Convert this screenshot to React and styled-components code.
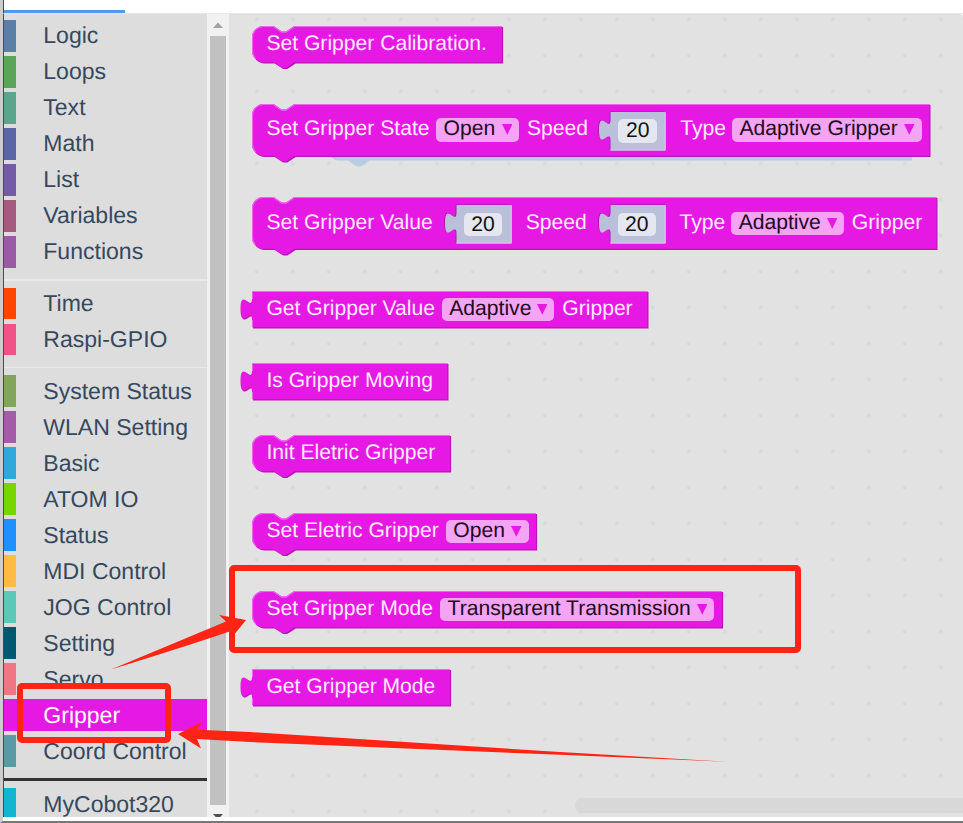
import React from "react";
import styled, { createGlobalStyle } from "styled-components";

const Global = createGlobalStyle`
  * { box-sizing: border-box; }
  body { margin: 0; background: #fff; overflow: hidden; font-family: "Liberation Sans", Arial, sans-serif; }
`;

const Page = styled.div`
  position: relative;
  display: flex;
  flex-direction: column;
  width: 963px;
  height: 823px;
  overflow: hidden;
  background: #fff;
  border-left: 3px solid #cdcdcd;
  border-bottom: 2px solid #777;
`;

const TabBar = styled.div`
  flex: none;
  display: flex;
  align-items: flex-end;
  height: 14px;
  border-left: 1px solid #4a4a4a;
  border-bottom: 1px solid #e4e8ec;
`;

const ActiveTab = styled.div`
  width: 121px;
  height: 3px;
  background: #4e9ae8;
`;

const Main = styled.div`
  flex: none;
  display: flex;
  height: 803px;
  border-left: 1px solid #4a4a4a;
`;

const Toolbox = styled.div`
  flex: none;
  display: flex;
  flex-direction: column;
  width: 203px;
  padding-top: 6px;
  overflow: hidden;
  background: #ddd;
`;

const Category = styled.div`
  flex: none;
  height: 31.68px;
  margin-bottom: 4.32px;
  padding-left: 27.3px;
  border-left: 12px solid ${(p) => p.$color};
  background: ${(p) => (p.$selected ? p.$color : "transparent")};
  color: ${(p) => (p.$selected ? "#fff" : "#35495e")};
  font-size: 23.04px;
  line-height: ${(p) => p.$line}px;
  text-rendering: geometricPrecision;
  white-space: nowrap;
`;

const Separator = styled.div`
  flex: none;
  height: ${(p) => (p.$strong ? 2.6 : 1.5)}px;
  margin: ${(p) => (p.$strong ? "7.2px 0 7px" : "7.4px 0 6.8px")};
  background: ${(p) => (p.$strong ? "#333" : "#e8e8e8")};
`;

const Scrollbar = styled.div`
  flex: none;
  display: flex;
  flex-direction: column;
  align-items: center;
  width: 22px;
  background: #f1f1f1;
  overflow: hidden;
`;

const ScrollButton = styled.div`
  flex: none;
  display: flex;
  justify-content: center;
  align-items: center;
  height: ${(p) => p.$h}px;
`;

const ScrollThumb = styled.div`
  flex: none;
  width: 16px;
  height: 769px;
  background: #c1c1c1;
`;

const Workspace = styled.div`
  position: relative;
  flex: 1;
  display: flex;
  flex-direction: column;
  border-top: 1px solid #dcdcdc;
  border-top-right-radius: 4px;
  background-color: #e2e2e2;
  background-image: radial-gradient(circle at 18px 18px, #d6d6d6 0, #d9d9d9 1.2px, rgba(226, 226, 226, 0) 2.6px);
  background-size: 36px 36px;
  background-position: 9.7px 22.5px;
  overflow: hidden;
`;

const BlockBox = styled.div`
  position: relative;
  flex: none;
  width: ${(p) => p.$w}px;
  height: ${(p) => p.$h}px;
  margin-left: 23.1px;
  margin-top: ${(p) => p.$gap}px;
`;

const BlockShape = styled.svg`
  position: absolute;
  left: 0;
  top: 0;
  overflow: visible;
`;

const GhostShape = styled(BlockShape)`
  left: 76px;
`;

const Fields = styled.div`
  position: relative;
  display: flex;
  align-items: flex-start;
  padding: ${(p) => (p.$tall ? 14.2 : 7.2)}px 0 0 14.3px;
`;

const Label = styled.span`
  flex: none;
  width: ${(p) => (p.$w ? `${p.$w}px` : "auto")};
  height: 23px;
  color: #ffe9ff;
  font-size: 21.12px;
  line-height: 22px;
  text-rendering: geometricPrecision;
  white-space: nowrap;
`;

const Dropdown = styled.span`
  flex: none;
  display: flex;
  justify-content: space-between;
  width: ${(p) => p.$w}px;
  height: 23.4px;
  margin-right: 7.8px;
  padding: 0 7px 0 7.2px;
  border-radius: 5px;
  background: #f5a3f4;
  color: #1d0a22;
  font-size: 21.12px;
  line-height: 22px;
  text-rendering: geometricPrecision;
  white-space: nowrap;
`;

const Arrow = styled.svg`
  flex: none;
  margin-top: 6px;
`;

const ValueBlock = styled.span`
  position: relative;
  flex: none;
  display: flex;
  justify-content: center;
  width: 66.6px;
  height: 39px;
  margin: -6.4px 14.2px 0 0;
  padding: 7.6px 0 0 9.8px;
`;

const NumberField = styled.span`
  position: relative;
  width: 38.5px;
  height: 23.4px;
  border-radius: 5px;
  background: #e4e7f0;
  color: #111;
  font-size: 21.12px;
  line-height: 23.4px;
  text-align: center;
  text-rendering: geometricPrecision;
`;

const HorizontalScroll = styled.div`
  position: absolute;
  left: 346px;
  right: -20px;
  bottom: 4px;
  height: 15px;
  border-radius: 8px;
  background: #d8d8d8;
`;

const Callout = styled.div`
  position: absolute;
  left: ${(p) => p.$x - 3}px;
  top: ${(p) => p.$y}px;
  width: ${(p) => p.$w}px;
  height: ${(p) => p.$h}px;
  border: 6px solid #ff2414;
  border-radius: 5px;
`;

const Arrows = styled.svg`
  position: absolute;
  left: -3px;
  top: 0;
`;

const TAB_DOWN = "v7.2c0,14.4 -11.5,-11.5 -11.5,10.8s11.5,-3.6 11.5,10.8";

const statementPath = (w, h) =>
  `M0,11.5a11.5,11.5 0 0 1 11.5,-11.5H21.6l8.2,5.6h4.2l8.2,-5.6H${w}V${h}H42.6l-8.4,5.5h-4.2l-8.4,-5.5H11.5a11.5,11.5 0 0 1 -11.5,-11.5z`;
const outputPath = (w, h) => `M0,0${TAB_DOWN}V${h}H${w}V0z`;

function Block({ w, h = 36.3, gap, output, ghost, children }) {
  const d = output ? outputPath(w, h) : statementPath(w, h);
  const light = output
    ? `M0.5,${h - 0.5}V29M0.5,8V0.5H${w}`
    : `M3.6,${h - 3.6}A11,11 0 0 1 0.5,${h - 11.5}V11.5a11,11 0 0 1 11,-11H21.4l8.3,5.6h4.4l8.3,-5.6H${w}`;
  return (
    <BlockBox $w={w} $h={h} $gap={gap}>
      {ghost && (
        <GhostShape width="583" height="64">
          <path d="M0,48Q3,56.5 11,56.5H20l8.6,5.7h4.3l8.6,-5.7H584V48z" fill="#b7cbe1" />
        </GhostShape>
      )}
      <BlockShape width={w} height={h + 8}>
        <path d={d} fill="#b814b6" transform="translate(1.1,1.1)" />
        <path d={d} fill="#e619e4" />
        <path d={light} fill="none" stroke="#ee66ec" strokeWidth="1.1" />
      </BlockShape>
      <Fields $tall={h > 40}>{children}</Fields>
    </BlockBox>
  );
}

function Select({ w, children }) {
  return (
    <Dropdown $w={w}>
      {children}
      <Arrow width="10.5" height="11" viewBox="0 0 10.5 11">
        <path d="M0,0H10.5L5.25,10.7z" fill="#e619e4" />
      </Arrow>
    </Dropdown>
  );
}

function Value({ children }) {
  return (
    <ValueBlock>
      <BlockShape width="67" height="39">
        <path d={`M11.5,0${TAB_DOWN}V38H66V0z`} fill="#a415a8" transform="translate(-0.8,-0.6)" />
        <path d={`M11.5,0${TAB_DOWN}V38.4H66.6V0z`} fill="#bac0da" />
        <path d="M11.5,38H66.2V0.5" fill="none" stroke="#dcc6e8" />
      </BlockShape>
      <NumberField>{children}</NumberField>
    </ValueBlock>
  );
}

const groups = [
  [["Logic", "#5b80a5"], ["Loops", "#5ba55b"], ["Text", "#5ba58c"], ["Math", "#5b67a5"], ["List", "#745ba5"], ["Variables", "#a55b80"], ["Functions", "#995ba5"]],
  [["Time", "#ff4500"], ["Raspi-GPIO", "#f05388"]],
  [["System Status", "#80a55b"], ["WLAN Setting", "#a55ba5"], ["Basic", "#2fa8dc"], ["ATOM IO", "#76d600"], ["Status", "#1e90ff"], ["MDI Control", "#ffbb44"], ["JOG Control", "#5bc8b8"], ["Setting", "#005871"], ["Servo", "#f07585"], ["Gripper", "#e619e4"], ["Coord Control", "#5b9aa5"]],
  [["MyCobot320", "#13b5d0"]],
];

const lineFor = (group, index) => {
  if (group < 2) return 31;
  return group === 2 && index > 0 ? 33.6 : 32;
};

export default function App() {
  return (
    <Page>
      <Global />
      <TabBar>
        <ActiveTab />
      </TabBar>
      <Main>
        <Toolbox>
          {groups.map((group, i) => (
            <React.Fragment key={i}>
              {i > 0 && <Separator $strong={i === 3} />}
              {group.map(([name, color], j) => (
                <Category key={name} $color={color} $line={lineFor(i, j)} $selected={name === "Gripper"}>
                  {name}
                </Category>
              ))}
            </React.Fragment>
          ))}
        </Toolbox>
        <Scrollbar>
          <ScrollButton $h={22}>
            <svg width="10" height="6"><path d="M0,6L5,0.5L10,6z" fill="#a3a3a3" /></svg>
          </ScrollButton>
          <ScrollThumb />
          <ScrollButton $h={24}>
            <svg width="10" height="6"><path d="M0,0L5,5.5L10,0z" fill="#505050" /></svg>
          </ScrollButton>
        </Scrollbar>
        <Workspace>
          <Block w={250} gap={11.3}>
            <Label>Set Gripper Calibration.</Label>
          </Block>
          <Block w={677.4} h={51.8} gap={41.4} ghost>
            <Label $w={170}>Set Gripper State</Label>
            <Select w={82.8}>Open</Select>
            <Label $w={72.5}>Speed</Label>
            <Value>20</Value>
            <Label $w={52}>Type</Label>
            <Select w={189.5}>Adaptive Gripper</Select>
          </Block>
          <Block w={684.4} h={51.8} gap={41.6}>
            <Label $w={178.5}>Set Gripper Value</Label>
            <Value>20</Value>
            <Label $w={73}>Speed</Label>
            <Value>20</Value>
            <Label $w={52}>Type</Label>
            <Select w={112.6}>Adaptive</Select>
            <Label>Gripper</Label>
          </Block>
          <Block w={395.4} gap={41.6} output>
            <Label $w={175.7}>Get Gripper Value</Label>
            <Select w={112.4}>Adaptive</Select>
            <Label>Gripper</Label>
          </Block>
          <Block w={195.4} gap={35.7} output>
            <Label>Is Gripper Moving</Label>
          </Block>
          <Block w={198} gap={36.1}>
            <Label>Init Eletric Gripper</Label>
          </Block>
          <Block w={284} gap={41.4}>
            <Label $w={179.7}>Set Eletric Gripper</Label>
            <Select w={82.5}>Open</Select>
          </Block>
          <Block w={470} gap={41.6}>
            <Label $w={174}>Set Gripper Mode</Label>
            <Select w={274}>Transparent Transmission</Select>
          </Block>
          <Block w={198} gap={41.5} output>
            <Label>Get Gripper Mode</Label>
          </Block>
          <HorizontalScroll />
        </Workspace>
      </Main>
      <Callout $x={229} $y={565} $w={572} $h={88} />
      <Callout $x={17} $y={683} $w={154} $h={60} />
      <Arrows width="963" height="823">
        <path d="M111,669.5L226,621.5L219,615L246,620L229,641L231,631Q190,645 111,669.5z" fill="#ff2414" />
        <path d="M178,734L202,722L197,729.7L250,732L560,752L727,761.7L560,754.8L250,742L197,739L201,748.5z" fill="#ff2414" />
      </Arrows>
    </Page>
  );
}
